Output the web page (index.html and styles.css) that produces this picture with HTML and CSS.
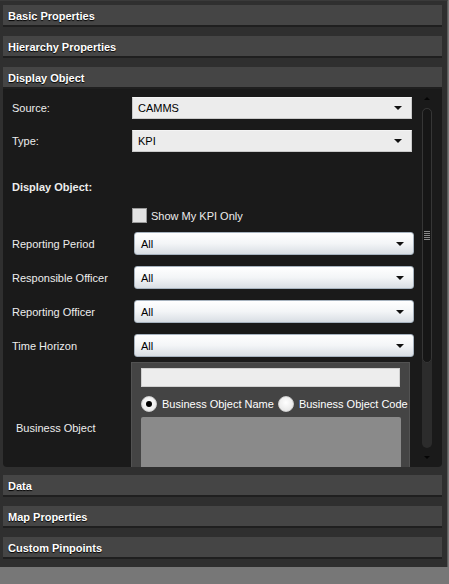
FILE: index.html
```html
<!DOCTYPE html>
<html lang="en">
  <head>
    <meta charset="UTF-8" />
    <meta name="viewport" content="width=device-width, initial-scale=1.0" />
    <title>Map Properties</title>
    <link rel="stylesheet" href="styles.css">
  </head>
  <body>
    <div class="sidebar">
      <div class="section-header">Basic Properties</div>
      <div class="section-header">Hierarchy Properties</div>
      <div class="section-header">Display Object</div>

      <!-- Display Object panel -->
      <div class="section-body">
        <div class="row row-source">
          <span class="label">Source:</span>
          <div class="select flat"><span>CAMMS</span><i class="caret"></i></div>
        </div>
        <div class="row row-type">
          <span class="label">Type:</span>
          <div class="select flat"><span>KPI</span><i class="caret"></i></div>
        </div>
        <div class="row row-heading">
          <span class="label strong">Display Object:</span>
        </div>
        <div class="row row-check">
          <span class="label"></span>
          <span class="checkbox"></span>
          <span class="check-text">Show My KPI Only</span>
        </div>
        <div class="row row-filter first">
          <span class="label">Reporting Period</span>
          <div class="select glossy"><span>All</span><i class="caret"></i></div>
        </div>
        <div class="row row-filter">
          <span class="label">Responsible Officer</span>
          <div class="select glossy"><span>All</span><i class="caret"></i></div>
        </div>
        <div class="row row-filter">
          <span class="label">Reporting Officer</span>
          <div class="select glossy"><span>All</span><i class="caret"></i></div>
        </div>
        <div class="row row-filter">
          <span class="label">Time Horizon</span>
          <div class="select glossy"><span>All</span><i class="caret"></i></div>
        </div>
        <div class="row row-business">
          <span class="label indent">Business Object</span>
          <div class="business-box">
            <div class="search-input"></div>
            <div class="radio-row">
              <span class="radio checked"></span>
              <span class="radio-text">Business Object Name</span>
              <span class="radio"></span>
              <span class="radio-text">Business Object Code</span>
            </div>
            <div class="object-list"></div>
          </div>
        </div>

        <div class="scrollbar">
          <i class="arrow up"></i>
          <div class="track">
            <div class="thumb"><span class="grip"></span></div>
          </div>
          <i class="arrow down"></i>
        </div>
      </div>

      <div class="section-header spaced">Data</div>
      <div class="section-header">Map Properties</div>
      <div class="section-header">Custom Pinpoints</div>
    </div>
  </body>
</html>
```

FILE: styles.css
```css
body {
  margin: 0;
  background: #777;
  font-family: "Liberation Sans", Arial, sans-serif;
  font-size: 11px;
}

.sidebar {
  width: 448px;
  height: 567px;
  box-sizing: border-box;
  padding: 4px 5px 0 3px;
  background: #2f2f2f;
  border-right: 1px solid #5a5a5a;
  border-top: 1px solid #3a3a3a;
}

.section-header {
  height: 20px;
  line-height: 22px;
  padding-left: 5px;
  margin-bottom: 9px;
  background: #454545;
  border-bottom: 2px solid #1f1f1f;
  color: #fff;
  font-weight: bold;
  text-shadow: 0 1px 1px #000;
}

.section-header:nth-child(3) {
  margin-bottom: 0;
}

.section-header.spaced {
  margin-top: 8px;
}

.section-body {
  position: relative;
  height: 378px;
  overflow: hidden;
  background: #1a1a1a;
  border-radius: 0 0 4px 4px;
  padding: 8px 0 0 9px;
  box-sizing: border-box;
  color: #ededed;
}

.row {
  display: flex;
  align-items: center;
}

.label {
  width: 120px;
  flex-shrink: 0;
}

.label.strong {
  font-weight: bold;
}

.label.indent {
  padding-left: 4px;
  width: 116px;
}

.row-source { height: 22px; }
.row-type { height: 22px; margin-top: 11px; }
.row-heading { height: 22px; margin-top: 24px; }
.row-check { height: 15px; margin-top: 10px; }
.row-filter { height: 23px; margin-top: 11px; }
.row-filter.first { margin-top: 9px; }
.row-filter .select { margin-left: 2px; }
.row-business { margin-top: 5px; }

.select {
  width: 280px;
  box-sizing: border-box;
  height: 100%;
  display: flex;
  align-items: center;
  justify-content: space-between;
  color: #000;
  padding: 0 9px 0 5px;
}

.select.flat {
  background: #ececec;
  border: 1px solid #c9c9c9;
  border-top-color: #f4f4f4;
}

.select.glossy {
  padding-left: 6px;
  background: linear-gradient(#ffffff, #f3f5f7 50%, #d9dee4);
  border: 1px solid #a7b3bf;
  border-radius: 3px;
}

.caret {
  width: 0;
  height: 0;
  border-left: 4px solid transparent;
  border-right: 4px solid transparent;
  border-top: 4px solid #111;
}

.checkbox {
  width: 13px;
  height: 13px;
  background: #e3e3e3;
  border: 1px solid #9a9a9a;
}

.check-text {
  margin-left: 4px;
}

.business-box {
  width: 279px;
  height: 132px;
  box-sizing: border-box;
  margin-left: -1px;
  padding: 5px 8px 0 9px;
  background: #444;
  border: 1px solid #525252;
  border-bottom: none;
}

.search-input {
  height: 19px;
  width: 259px;
  background: #ededed;
  border: 1px solid #d0d0d0;
  box-sizing: border-box;
}

.radio-row {
  display: flex;
  align-items: center;
  height: 16px;
  margin-top: 9px;
  color: #fff;
  white-space: nowrap;
}

.radio {
  width: 14px;
  height: 14px;
  flex-shrink: 0;
  border-radius: 50%;
  border: 1px solid #cfcfcf;
  background: radial-gradient(circle at 50% 40%, #ffffff, #e2e2e2);
  display: flex;
  align-items: center;
  justify-content: center;
}

.radio.checked::after {
  content: "";
  width: 6px;
  height: 6px;
  border-radius: 50%;
  background: #000;
}

.radio-text {
  flex-shrink: 0;
  margin: 0 4px 0 5px;
}

.object-list {
  margin-top: 5px;
  width: 260px;
  height: 90px;
  background: #8a8a8a;
  border-radius: 2px 2px 0 0;
}

.scrollbar {
  position: absolute;
  left: 419px;
  top: 5px;
  bottom: 5px;
  width: 10px;
  display: flex;
  flex-direction: column;
  align-items: center;
}

.arrow {
  width: 0;
  height: 0;
  border-left: 3px solid transparent;
  border-right: 3px solid transparent;
}

.arrow.up {
  border-bottom: 3px solid #050505;
  margin: 3px 0 8px;
}

.arrow.down {
  border-top: 3px solid #050505;
  margin: 8px 0 3px;
}

.track {
  flex: 1;
  width: 10px;
  background: #2c2c2c;
  border-radius: 5px;
}

.thumb {
  height: 255px;
  box-sizing: border-box;
  background: #161616;
  border: 1px solid #363636;
  border-radius: 5px;
  display: flex;
  align-items: center;
  justify-content: center;
}

.grip {
  width: 6px;
  height: 9px;
  background: repeating-linear-gradient(#8a8a8a 0 1px, transparent 1px 2px);
}
```
